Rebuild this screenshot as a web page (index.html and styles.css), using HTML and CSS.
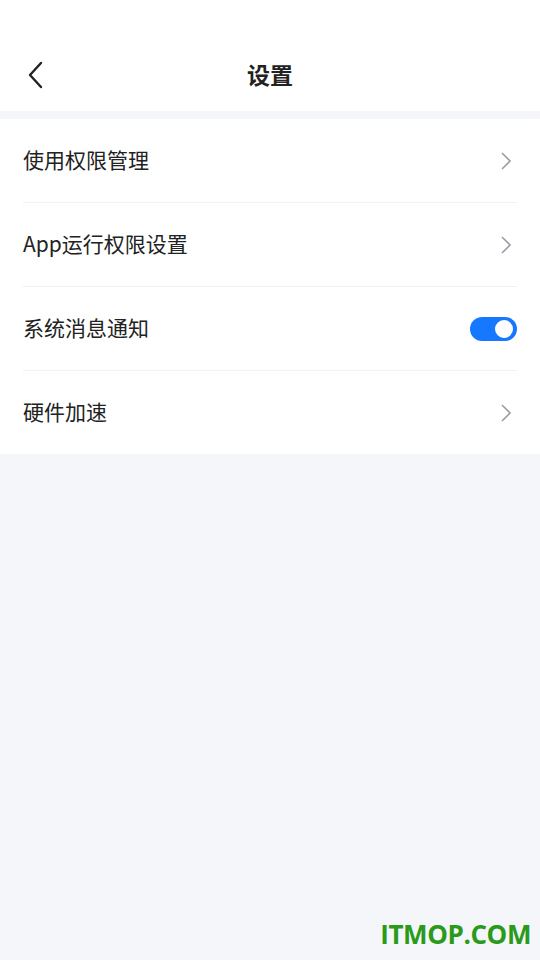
FILE: index.html
```html
<!DOCTYPE html>
<html lang="zh-CN">
<head>
  <meta charset="UTF-8" />
  <meta name="viewport" content="width=device-width, initial-scale=1.0"/>
  <title>设置</title>
  <link rel="stylesheet" href="styles.css">
</head>
<body>

  <!-- top bar -->
  <header class="topbar">
    <span class="back">
      <svg width="18" height="28" viewBox="0 0 18 28"><path d="M15 2 L4 14 L15 26" fill="none" stroke="#222" stroke-width="2.4" stroke-linecap="round" stroke-linejoin="round"/></svg>
    </span>
    <h1>设置</h1>
  </header>

  <section class="list">
    <div class="row">
      <span class="label">使用权限管理</span>
      <svg class="chev" width="12" height="20" viewBox="0 0 12 20"><path d="M2 2 L10 10 L2 18" fill="none" stroke="#9a9ca6" stroke-width="1.6"/></svg>
    </div>
    <div class="row">
      <span class="label">App运行权限设置</span>
      <svg class="chev" width="12" height="20" viewBox="0 0 12 20"><path d="M2 2 L10 10 L2 18" fill="none" stroke="#9a9ca6" stroke-width="1.6"/></svg>
    </div>
    <div class="row">
      <span class="label">系统消息通知</span>
      <span class="toggle on"><span class="knob"></span></span>
    </div>
    <div class="row">
      <span class="label">硬件加速</span>
      <svg class="chev" width="12" height="20" viewBox="0 0 12 20"><path d="M2 2 L10 10 L2 18" fill="none" stroke="#9a9ca6" stroke-width="1.6"/></svg>
    </div>
  </section>

  <div class="watermark">ITMOP.COM</div>

</body>
</html>
```

FILE: styles.css
```css
body {
  margin: 0;
  background: #f5f6fa;
  font-family: "Noto Sans CJK SC", "Noto Sans", sans-serif;
  color: #222;
  height: 960px;
  position: relative;
  overflow: hidden;
}

.topbar {
  background: #fff;
  height: 111px;
  display: flex;
  align-items: flex-end;
  justify-content: center;
  position: relative;
}

.topbar h1 {
  margin: 0 0 21px;
  font-size: 23px;
  font-weight: bold;
  line-height: 32px;
  color: #222;
}

.back {
  position: absolute;
  left: 26px;
  top: 61px;
  display: block;
  height: 28px;
}

.list {
  background: #fff;
  margin-top: 8px;
}

.row {
  height: 83px;
  margin: 0 23px;
  display: flex;
  align-items: center;
  justify-content: space-between;
  border-bottom: 1px solid #f0f1f5;
}

.row:last-child {
  border-bottom: none;
}

.label {
  font-size: 21px;
  color: #222;
  line-height: 30px;
  padding-bottom: 3px;
}

.chev {
  margin-right: 5px;
}

.toggle {
  width: 47px;
  height: 24px;
  border-radius: 12px;
  background: #1677ff;
  position: relative;
}

.knob {
  position: absolute;
  right: 4px;
  top: 3px;
  width: 18px;
  height: 18px;
  border-radius: 50%;
  background: #fff;
}

.watermark {
  position: absolute;
  right: 9px;
  bottom: 8px;
  font-family: "Open Sans", "Liberation Sans", sans-serif;
  font-weight: bold;
  font-size: 26px;
  color: #2a9a1a;
  letter-spacing: -0.4px;
}
```
